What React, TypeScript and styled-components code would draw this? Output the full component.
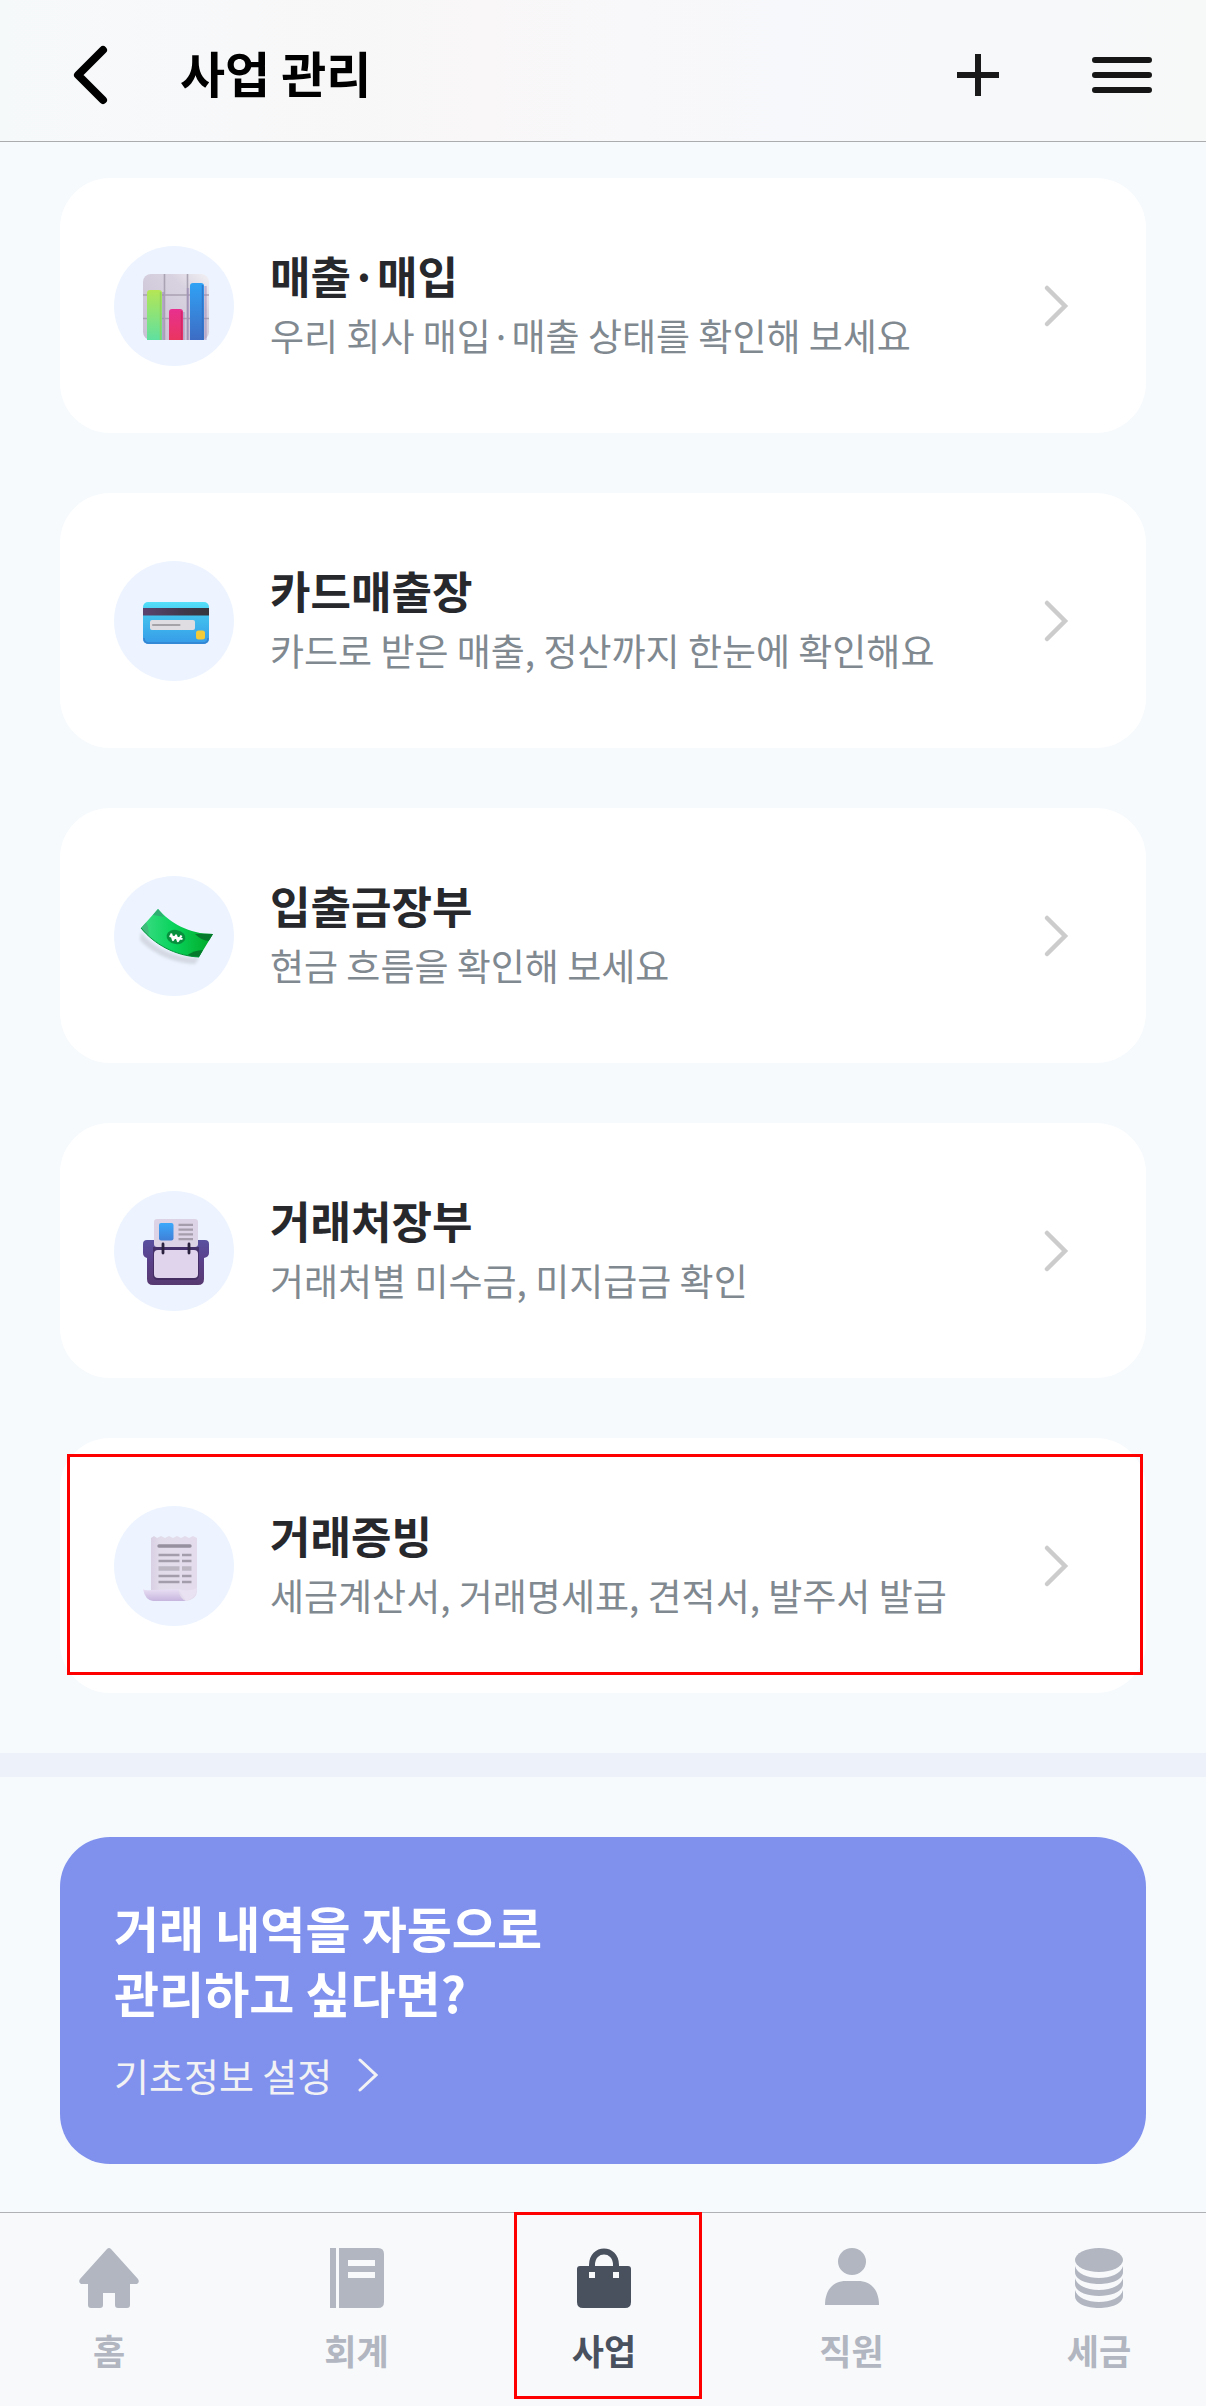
import React from 'react';
import styled, { createGlobalStyle } from 'styled-components';

const GlobalStyle = createGlobalStyle`
    * {
        box-sizing: border-box;
    }

    body {
        margin: 0;
        background: #f6fafd;
        font-family: "Noto Sans CJK KR", sans-serif;
    }

    h1, h2, p, ul {
        margin: 0;
        padding: 0;
    }

    button {
        padding: 0;
        border: 0;
        background: none;
        font-family: inherit;
        cursor: pointer;
    }

    a {
        color: inherit;
        text-decoration: none;
    }

    svg {
        display: block;
    }
`;

const Page = styled.div`
    display: flex;
    flex-direction: column;
    min-height: 100vh;
`;

const Header = styled.header`
    display: flex;
    align-items: center;
    height: 142px;
    padding: 8px 54px 0 60px;
    background: linear-gradient(90deg, #f6f9fa, #f9f7f8 40%, #f7f8fb 65%, #f7f8f8);
    border-bottom: 1px solid #abacad;
`;

const HeaderTitle = styled.h1`
    flex: 1;
    margin-left: 60px;
    padding-bottom: 6px;
    color: #000;
    font-size: 49px;
    font-weight: 700;
    line-height: 65px;
`;

const HeaderActions = styled.div`
    display: flex;
    gap: 84px;
`;

const IconButton = styled.button`
    display: flex;
    align-items: center;
    justify-content: center;
    width: 60px;
    height: 60px;
`;

const Menu = styled.ul`
    display: flex;
    flex-direction: column;
    gap: 60px;
    padding: 36px 60px 60px;
    list-style: none;
`;

const MenuCard = styled.li`
    position: relative;
`;

const MenuLink = styled.a`
    display: flex;
    align-items: center;
    gap: 36px;
    height: 255px;
    padding: 0 76px 0 54px;
    background: #fff;
    border-radius: 50px;
`;

const IconCircle = styled.span`
    display: flex;
    align-items: center;
    justify-content: center;
    flex-shrink: 0;
    width: 120px;
    height: 120px;
    padding: 3px 0 0 4px;
    background: #edf4ff;
    border-radius: 50%;
`;

const MenuText = styled.div`
    flex: 1;
    padding-bottom: 2px;
`;

const MenuName = styled.h2`
    color: #27282c;
    font-size: 44px;
    font-weight: 700;
    line-height: 60px;
`;

const MenuDesc = styled.p`
    color: #808890;
    font-size: 37px;
    line-height: 60px;
`;

const Divider = styled.div`
    height: 24px;
    background: #edf1fa;
`;

const Banner = styled.section`
    margin: 60px 60px 48px;
    padding: 57px 54px 59px;
    background: #7f91ed;
    border-radius: 50px;
`;

const BannerTitle = styled.h2`
    color: #fff;
    font-size: 49px;
    font-weight: 700;
    line-height: 65px;
`;

const BannerLink = styled.a`
    display: inline-flex;
    align-items: center;
    gap: 26px;
    margin-top: 21px;
    color: #f2f2f4;
    font-size: 38px;
    line-height: 60px;
`;

const TabBar = styled.nav`
    display: flex;
    justify-content: space-between;
    flex: 1;
    padding: 0 13px 0 15px;
    background: #f8f9fb;
    border-top: 1px solid #b0b1b4;
`;

const Tab = styled.a<{ $active?: boolean }>`
    position: relative;
    display: flex;
    flex-direction: column;
    align-items: center;
    gap: 15px;
    width: 188px;
    padding-top: 35px;
    color: ${({ $active }) => ($active ? '#49505e' : '#b1b6c0')};
    font-size: 35px;
    font-weight: 700;
    line-height: 54px;
`;

const CardMark = styled.span`
    position: absolute;
    inset: 16px 3px 18px 7px;
    border: 3px solid #f00;
    pointer-events: none;
`;

const TabMark = styled.span`
    position: absolute;
    top: -1px;
    left: 4px;
    width: 188px;
    height: 187px;
    border: 3px solid #f00;
    pointer-events: none;
`;

const ChartIcon = () => (
    <svg width="66" height="66" viewBox="0 0 66 66">
        <defs>
            <linearGradient id="chartBoard" x1="0" y1="1" x2="1" y2="0">
                <stop offset="0" stopColor="#c9c0d4" />
                <stop offset=".7" stopColor="#d8d2e0" />
                <stop offset="1" stopColor="#f2f0f4" />
            </linearGradient>
            <linearGradient id="chartGreen" x1="0" y1="0" x2="0" y2="1">
                <stop offset="0" stopColor="#b5e655" />
                <stop offset="1" stopColor="#5fe0a0" />
            </linearGradient>
            <linearGradient id="chartRed" x1="0" y1="0" x2="0" y2="1">
                <stop offset="0" stopColor="#e8308f" />
                <stop offset="1" stopColor="#ea3560" />
            </linearGradient>
            <linearGradient id="chartBlue" x1="0" y1="0" x2="0" y2="1">
                <stop offset="0" stopColor="#30a2f5" />
                <stop offset="1" stopColor="#3d6cc4" />
            </linearGradient>
        </defs>
        <rect x="0" y="0" width="66" height="66" rx="8" fill="url(#chartBoard)" />
        <path d="M21.500 0V66M44.500 0V66M0 21H66M0 44.500H66" stroke="#aaa3b3" strokeWidth="1.600" />
        <path d="M20 18V66M40.500 38V66M45 14V66M62.500 12V66" stroke="#9a87b8" strokeWidth="2.400" opacity=".5" />
        <path d="M4 66V19Q4 16 7 16H16Q19 16 19 19V66Z" fill="url(#chartGreen)" />
        <path d="M26 66V38Q26 35 29 35H37Q40 35 40 38V66Z" fill="url(#chartRed)" />
        <path d="M47 66V12Q47 9 50 9H58Q61 9 61 12V66Z" fill="url(#chartBlue)" />
        <path d="M17.500 18V66" stroke="#8fce55" strokeWidth="1.500" opacity=".7" />
        <path d="M38.500 37V66" stroke="#c9245f" strokeWidth="1.500" opacity=".7" />
        <path d="M59.500 11V66" stroke="#2f6cc0" strokeWidth="1.500" opacity=".7" />
    </svg>
);

const CardIcon = () => (
    <svg width="66" height="66" viewBox="0 0 66 66">
        <defs>
            <linearGradient id="cardBody" x1="0" y1="0" x2="0" y2="1">
                <stop offset="0" stopColor="#55e0f8" />
                <stop offset=".35" stopColor="#42c0ee" />
                <stop offset="1" stopColor="#369be8" />
            </linearGradient>
            <linearGradient id="cardStripe">
                <stop offset="0" stopColor="#5b4470" />
                <stop offset=".6" stopColor="#40384c" />
                <stop offset="1" stopColor="#36353c" />
            </linearGradient>
        </defs>
        <rect x="0" y="13" width="66" height="42" rx="5" fill="url(#cardBody)" />
        <path d="M1 49Q1 54 6 54H60Q65 54 65 49" fill="none" stroke="#3583d0" strokeWidth="1.500" />
        <rect x="0" y="19" width="66" height="7.500" fill="url(#cardStripe)" />
        <rect x="7" y="31" width="45" height="10" rx="2" fill="#e0dde2" />
        <path d="M10 36H36.500" stroke="#a5a2a8" strokeWidth="2.200" strokeLinecap="round" />
        <rect x="53" y="41.500" width="9" height="9" rx="2.500" fill="#f3cb38" />
    </svg>
);

const CashIcon = () => (
    <svg width="76" height="66" viewBox="0 0 76 66">
        <defs>
            <linearGradient id="cashBody">
                <stop offset="0" stopColor="#3ddc84" />
                <stop offset=".45" stopColor="#08d35c" />
                <stop offset="1" stopColor="#02a826" />
            </linearGradient>
            <clipPath id="cashClip">
                <path d="M20 5C32 19 51 30 75 30L61 53C37 52 16 40 3 24Z" />
            </clipPath>
            <filter id="cashBlur" x="-20%" y="-20%" width="140%" height="140%">
                <feGaussianBlur stdDeviation="1.500" />
            </filter>
        </defs>
        <path d="M3 28C14 42 35 54 61 54L57 60C34 59 13 48 2 36Z" fill="#d3d8e2" filter="url(#cashBlur)" />
        <path d="M20 5C32 19 51 30 75 30L61 53C37 52 16 40 3 24Z" fill="url(#cashBody)" />
        <g clipPath="url(#cashClip)">
            <path d="M15 11L26 13L20 3Z" fill="#2fae72" />
            <path d="M8 18Q12 24 10 34L0 26Z" fill="#3fbb7c" />
            <path d="M57 30Q64 37 71 37L78 29Z" fill="#057a2c" />
            <path d="M48 52Q56 46 65 46L61 55Z" fill="#057a2c" />
        </g>
        <ellipse cx="38" cy="33" rx="9.500" ry="7" fill="#07913f" transform="rotate(12 38 33)" />
        <path d="M33 29.500L35 36L38 31.500L40 37L43.500 31.500M31.500 32L44.500 35" fill="none" stroke="#fff" strokeWidth="2.200" strokeLinejoin="round" />
        <path d="M3 24C16 40 37 52 61 53" fill="none" stroke="#04953a" strokeWidth="1" />
    </svg>
);

const BinderIcon = () => (
    <svg width="66" height="66" viewBox="0 0 66 66">
        <defs>
            <linearGradient id="binderBody" x1="0" y1="0" x2="0" y2="1">
                <stop offset="0" stopColor="#5950a0" />
                <stop offset=".5" stopColor="#5a3f88" />
                <stop offset="1" stopColor="#583a70" />
            </linearGradient>
            <linearGradient id="binderPhoto" x1="0" y1="0" x2="0" y2="1">
                <stop offset="0" stopColor="#3aa8fa" />
                <stop offset="1" stopColor="#4080d8" />
            </linearGradient>
        </defs>
        <path d="M4 21H62Q66 21 66 25V34Q66 38 61 39V60Q61 66 55 66H10Q4 66 4 60V39Q0 38 0 34V25Q0 21 4 21Z" fill="url(#binderBody)" />
        <path d="M10 28H56V56Q56 61 51 61H15Q10 61 10 56Z" fill="#3c2658" opacity=".7" />
        <rect x="11" y="0" width="44" height="28" rx="3" fill="#ddd3e6" />
        <rect x="11" y="31" width="44" height="28" rx="4" fill="#e0d4ec" />
        <rect x="16" y="4" width="14.500" height="17.500" rx="2" fill="url(#binderPhoto)" />
        <path d="M35.500 5.800H50M35.500 10.600H50M35.500 15.400H50M35.500 20.200H50" stroke="#a59dac" strokeWidth="2.200" />
        <path d="M20 25V34M46 25V34" stroke="#2b2240" strokeWidth="2.800" strokeLinecap="round" />
    </svg>
);

const ReceiptIcon = () => (
    <svg width="66" height="72" viewBox="0 0 66 72">
        <defs>
            <linearGradient id="receiptPaper">
                <stop offset="0" stopColor="#d9d0e4" />
                <stop offset=".2" stopColor="#e2dcea" />
                <stop offset="1" stopColor="#e4dced" />
            </linearGradient>
            <linearGradient id="receiptRoll" x1="0" y1="0" x2="0" y2="1">
                <stop offset="0" stopColor="#e9e0f4" />
                <stop offset="1" stopColor="#c6b5de" />
            </linearGradient>
        </defs>
        <path d="M8 7L11 5L14 7L18 5L22 7L26 5L30 7L34 5L38 7L42 5L46 7L50 5L54 7V60Q54 68 43 70L8 62Z" fill="url(#receiptPaper)" />
        <path d="M0 58Q2 60 9 59L35 58Q37 68 43 70H10Q2 69 0 58Z" fill="url(#receiptRoll)" />
        <path d="M35 58Q40 65 43 70Q54 67 54 57Q47 61 35 58Z" fill="#e9e2f3" />
        <path d="M16 15H47" stroke="#958f9e" strokeWidth="3.400" strokeLinecap="round" />
        <path d="M15.500 24H36.500M39 24H48.500M15.500 30H36.500M39 30H48.500M15.500 45H36.500M39 45H48.500M15.500 51H36.500M39 51H48.500" stroke="#a39dab" strokeWidth="2.400" />
        <path d="M15.500 37.500H36.500M39 37.500H48.500" stroke="#bcb6c3" strokeWidth="4.500" />
    </svg>
);

const Chevron = () => (
    <svg width="28" height="44" viewBox="0 0 28 44" fill="none" stroke="#cccccd" strokeWidth="4.500" strokeLinecap="round">
        <path d="M5 4L23 22L5 40" />
    </svg>
);

const HomeIcon = () => (
    <svg width="60" height="60" viewBox="0 0 60 60" fill="currentColor">
        <path d="M28 1Q30-1 32 1L59 31Q61 34 58 36H51V57Q51 60 48 60H39Q36 60 36 57V45H24V57Q24 60 21 60H12Q9 60 9 57V36H2Q-1 34 1 31Z" />
    </svg>
);

const BookIcon = () => (
    <svg width="60" height="60" viewBox="0 0 60 60" fill="currentColor">
        <path d="M3 0H9V60H3Z" />
        <path fillRule="evenodd" d="M12 0H51Q57 0 57 6V54Q57 60 51 60H12ZM21 12V18H48V12ZM21 24V30H48V24Z" />
    </svg>
);

const BagIcon = () => (
    <svg width="60" height="60" viewBox="0 0 60 60" fill="currentColor">
        <path d="M18 20V17C18 -1 42 -1 42 17V20" fill="none" stroke="currentColor" strokeWidth="6" />
        <path fillRule="evenodd" d="M6 18H54Q57 18 57 21V54Q57 60 51 60H9Q3 60 3 54V21Q3 18 6 18ZM15 24V30H21V24ZM39 24V30H45V24Z" />
    </svg>
);

const PersonIcon = () => (
    <svg width="60" height="60" viewBox="0 0 60 60" fill="currentColor">
        <ellipse cx="30" cy="13.500" rx="14" ry="13.500" />
        <path d="M3 57C3 42 11 33 24 33H36C49 33 57 42 57 57Z" />
    </svg>
);

const CoinsIcon = () => (
    <svg width="60" height="60" viewBox="0 0 60 60" fill="currentColor">
        <ellipse cx="30" cy="12" rx="24" ry="12" />
        <path d="M6 18C10 34 50 34 54 18V24C54 40 6 40 6 24Z" />
        <path d="M6 30C10 46 50 46 54 30V36C54 52 6 52 6 36Z" />
        <path d="M6 42C10 58 50 58 54 42V48C54 64 6 64 6 48Z" />
    </svg>
);

const menus = [
    { name: '매출·매입', desc: '우리 회사 매입·매출 상태를 확인해 보세요', icon: <ChartIcon /> },
    { name: '카드매출장', desc: '카드로 받은 매출, 정산까지 한눈에 확인해요', icon: <CardIcon /> },
    { name: '입출금장부', desc: '현금 흐름을 확인해 보세요', icon: <CashIcon /> },
    { name: '거래처장부', desc: '거래처별 미수금, 미지급금 확인', icon: <BinderIcon /> },
    { name: '거래증빙', desc: '세금계산서, 거래명세표, 견적서, 발주서 발급', icon: <ReceiptIcon />, marked: true }
];

const tabs = [
    { name: '홈', icon: <HomeIcon /> },
    { name: '회계', icon: <BookIcon /> },
    { name: '사업', icon: <BagIcon />, active: true },
    { name: '직원', icon: <PersonIcon /> },
    { name: '세금', icon: <CoinsIcon /> }
];

const App = () => {
    return (
        <Page>
            <GlobalStyle />
            <Header>
                <IconButton type="button" aria-label="뒤로">
                    <svg width="40" height="60" viewBox="0 0 40 60" fill="none" stroke="#000" strokeWidth="8" strokeLinecap="round" strokeLinejoin="round">
                        <path d="M33 5L8 30L33 55" />
                    </svg>
                </IconButton>
                <HeaderTitle>사업 관리</HeaderTitle>
                <HeaderActions>
                    <IconButton type="button" aria-label="추가">
                        <svg width="42" height="42" viewBox="0 0 42 42" stroke="#1a1a1a" strokeWidth="6">
                            <path d="M21 0V42M0 21H42" />
                        </svg>
                    </IconButton>
                    <IconButton type="button" aria-label="메뉴">
                        <svg width="60" height="36" viewBox="0 0 60 36" stroke="#161616" strokeWidth="6" strokeLinecap="round">
                            <path d="M3 3H57M3 18H57M3 33H57" />
                        </svg>
                    </IconButton>
                </HeaderActions>
            </Header>
            <main>
                <Menu>
                    {menus.map(menu => (
                        <MenuCard key={menu.name}>
                            <MenuLink href="#">
                                <IconCircle>{menu.icon}</IconCircle>
                                <MenuText>
                                    <MenuName>{menu.name}</MenuName>
                                    <MenuDesc>{menu.desc}</MenuDesc>
                                </MenuText>
                                <Chevron />
                            </MenuLink>
                            {menu.marked && <CardMark />}
                        </MenuCard>
                    ))}
                </Menu>
                <Divider />
                <Banner>
                    <BannerTitle>거래 내역을 자동으로<br />관리하고 싶다면?</BannerTitle>
                    <BannerLink href="#">
                        기초정보 설정
                        <svg width="20" height="34" viewBox="0 0 20 34" fill="none" stroke="#f2f2f4" strokeWidth="3" strokeLinecap="round">
                            <path d="M2 2L18 17L2 32" />
                        </svg>
                    </BannerLink>
                </Banner>
            </main>
            <TabBar>
                {tabs.map(tab => (
                    <Tab key={tab.name} href="#" $active={tab.active}>
                        {tab.icon}
                        {tab.name}
                        {tab.active && <TabMark />}
                    </Tab>
                ))}
            </TabBar>
        </Page>
    );
};

export default App;
